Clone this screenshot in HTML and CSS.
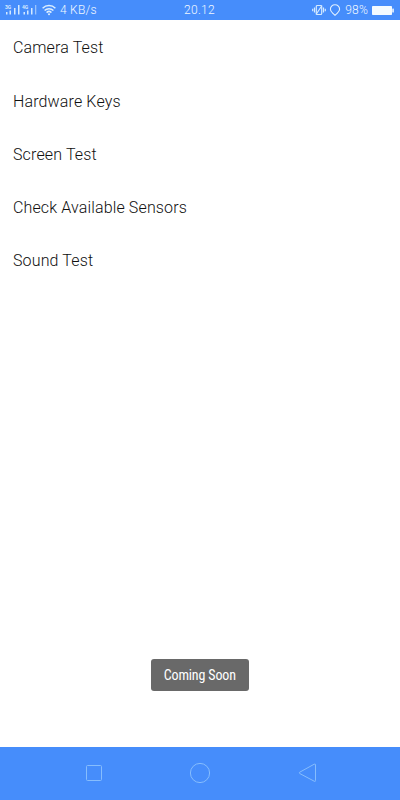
FILE: index.html
```
<!DOCTYPE html>
<html lang="en">
<head>
    <meta charset="UTF-8">
    <meta name="viewport" content="width=device-width, initial-scale=1.0">
    <title>Device Test</title>
    <link rel="stylesheet" href="styles.css">
</head>
<body>
    <div class="screen">
        <header class="status-bar">
            <div class="status-left">
                <svg class="signal" width="32" height="12" viewBox="0 0 32 12">
                    <g fill="#d3e9ff">
                        <text x="0" y="4.5" class="network">3G</text>
                        <path d="M1 8h1.500v2.500H1zM4.500 6.500H6v4H4.500zM9 4h1.500v6.500H9zM13 1h1.500v9.500H13z"/>
                        <text x="17" y="4.500" class="network">4G</text>
                        <path d="M18.500 8H20v2.500h-1.500zM22 6.500h1.500v4H22zM26 4h1.500v6.500H26z"/>
                        <path d="M30 1h1.300v9.500H30z" opacity=".6"/>
                    </g>
                </svg>
                <svg class="wifi" width="14" height="12" viewBox="0 0 14 12" fill="none" stroke="#dceeff" stroke-width="1.500">
                    <path d="M.6 4.200a9.200 9.200 0 0 1 12.800 0M2.600 6.500a6.200 6.200 0 0 1 8.800 0M4.600 8.600a3.400 3.400 0 0 1 4.800 0"/>
                    <circle cx="7" cy="10.200" r="1" fill="#dceeff" stroke="none"/>
                </svg>
                <span class="speed">4 KB/s</span>
            </div>
            <span class="clock">20.12</span>
            <div class="status-right">
                <svg class="vibrate" width="14" height="12" viewBox="0 0 14 12" fill="none" stroke="#d3e9ff" stroke-width="1.200">
                    <rect x="4.300" y="1.500" width="5.400" height="9" rx="1"/>
                    <path d="M4 10.500l6-9M2.500 3.500v5M11.500 3.500v5M.7 4.800v2.400M13.300 4.800v2.400"/>
                </svg>
                <svg class="location" width="12" height="12" viewBox="0 0 12 12" fill="none" stroke="#e2f1ff" stroke-width="1.100">
                    <path d="M6 .8C3.200.8 1.400 2.800 1.400 5.200c0 2.100 1.400 3.200 2.800 4.500L6 11.300l1.800-1.600c1.400-1.300 2.800-2.400 2.800-4.500C10.600 2.800 8.800.8 6 .8z"/>
                </svg>
                <span class="percent">98%</span>
                <svg class="battery" width="22" height="9" viewBox="0 0 22 9" fill="#f3faff">
                    <rect width="20" height="9" rx=".8"/>
                    <rect x="20.300" y="2.500" width="1.500" height="4" rx=".5"/>
                </svg>
            </div>
        </header>

        <main class="content">
            <ul class="test-list">
                <li>Camera Test</li>
                <li>Hardware Keys</li>
                <li>Screen Test</li>
                <li>Check Available Sensors</li>
                <li>Sound Test</li>
            </ul>
        </main>

        <nav class="nav-bar">
            <svg width="22" height="22" viewBox="0 0 22 22">
                <rect x="4.500" y="3.500" width="15" height="15" rx="1"/>
            </svg>
            <svg width="22" height="22" viewBox="0 0 22 22">
                <circle cx="11" cy="11" r="9.600"/>
            </svg>
            <svg width="22" height="22" viewBox="0 0 22 22">
                <path d="M3.700 10.200L18.200 2.200Q19.500 1.500 19.500 3v15.500Q19.500 20 18.200 19.200L3.700 11.500Q2.800 10.900 3.700 10.200z"/>
            </svg>
        </nav>

        <div class="toast">Coming Soon</div>
    </div>
</body>
</html>
```
FILE: styles.css
```
* {
    margin: 0;
    padding: 0;
    box-sizing: border-box;
}

body {
    font-family: Roboto, "Liberation Sans", sans-serif;
    background: #fff;
}

svg {
    display: block;
    flex: none;
}

.screen {
    position: relative;
    display: flex;
    flex-direction: column;
    height: 800px;
    overflow: hidden;
}

.status-bar {
    display: grid;
    grid-template-columns: 1fr auto 1fr;
    align-items: center;
    height: 20px;
    padding: 0 6px 0 5px;
    background: #468dfb;
    color: #f0f8ff;
    font-size: 12px;
    font-weight: 350;
    line-height: 19px;
}

.status-left,
.status-right {
    display: flex;
    align-items: center;
}

.status-right {
    justify-content: flex-end;
}

.network {
    font-size: 5px;
    font-weight: 700;
}

.wifi {
    margin: 0 4px 0 5px;
}

.speed {
    letter-spacing: 0.25px;
}

.clock {
    padding-top: 1px;
    letter-spacing: 0.35px;
}

.percent {
    letter-spacing: 0.2px;
}

.location {
    margin: 0 4px 0 3px;
}

.battery {
    margin-left: 4px;
}

.content {
    flex: 1;
}

.test-list {
    padding-top: 0.3px;
    list-style: none;
}

.test-list li {
    height: 53.3px;
    padding-left: 13px;
    color: #101010;
    font-size: 16px;
    font-weight: 350;
    line-height: 56px;
    letter-spacing: 0.14px;
}

.nav-bar {
    display: flex;
    justify-content: center;
    align-items: center;
    gap: 85px;
    height: 53.5px;
    background: #468dfb;
    fill: none;
    stroke: #86bdfd;
}

.toast {
    position: absolute;
    left: 150.5px;
    top: 658.5px;
    width: 98.5px;
    height: 32.5px;
    border-radius: 3px;
    background: #696969;
    color: #fff;
    font-family: "Roboto Condensed", Roboto, sans-serif;
    font-size: 14px;
    font-stretch: 75%;
    line-height: 33px;
    letter-spacing: -0.15px;
    text-align: center;
}
```
